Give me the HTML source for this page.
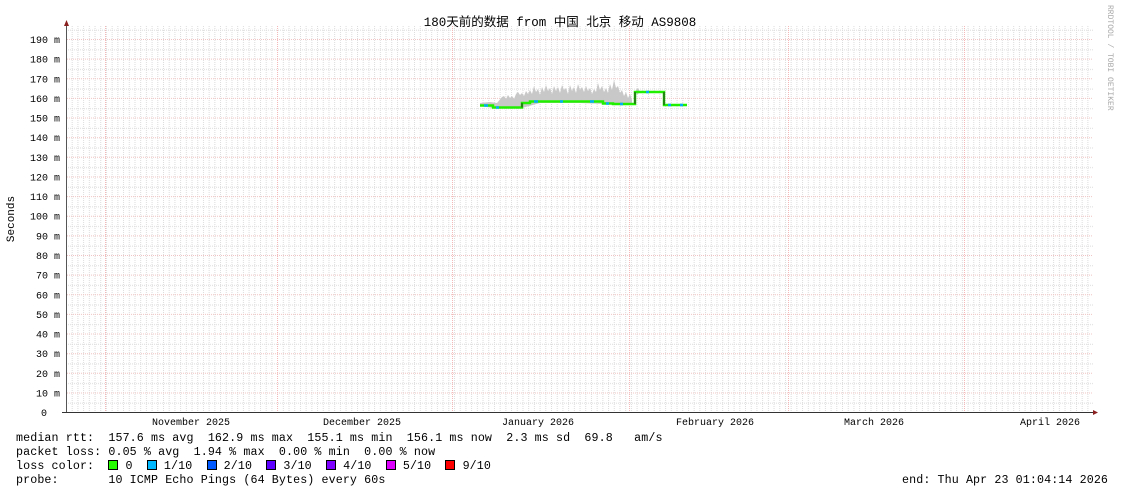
<!DOCTYPE html>
<html><head><meta charset="utf-8"><style>
html,body{margin:0;padding:0;background:#fff;}
body{width:1121px;height:494px;overflow:hidden;position:relative;}
svg{position:absolute;left:0;top:0;}
text{font-family:"Liberation Mono","DejaVu Sans Mono",monospace;font-size:10px;fill:#000;}
.leg{position:absolute;left:16px;font-family:"Liberation Mono",monospace;font-size:11.67px;letter-spacing:0.11px;white-space:pre;line-height:14px;color:#000;}
.sq{display:inline-block;width:8px;height:8px;border:1px solid #000;vertical-align:-1px;}
</style></head><body>
<svg width="1121" height="494" xmlns="http://www.w3.org/2000/svg">
<defs>
<pattern id="vg" x="66" y="0" width="5.706" height="2" patternUnits="userSpaceOnUse"><rect x="0" y="0" width="1" height="1" fill="#dcdcdc"/></pattern>
<pattern id="hg" x="0" y="26" width="2" height="19.63" patternUnits="userSpaceOnUse"><rect x="0" y="3.7" width="1" height="1" fill="#dcdcdc"/></pattern>
</defs>
<rect x="67" y="26" width="1026" height="386" fill="url(#vg)"/>
<rect x="67" y="26" width="1026" height="386" fill="url(#hg)"/>
<g stroke="#f5b8b8" stroke-dasharray="1,1">
<line x1="105.5" y1="26" x2="105.5" y2="412"/><line x1="277.5" y1="26" x2="277.5" y2="412"/><line x1="452.5" y1="26" x2="452.5" y2="412"/><line x1="629.5" y1="26" x2="629.5" y2="412"/><line x1="788.5" y1="26" x2="788.5" y2="412"/><line x1="964.5" y1="26" x2="964.5" y2="412"/>
</g>
<g stroke="#f0c4c4" stroke-dasharray="1,1">
<line x1="67" x2="1093" y1="39.5" y2="39.5"/><line x1="67" x2="1093" y1="59.1" y2="59.1"/><line x1="67" x2="1093" y1="78.8" y2="78.8"/><line x1="67" x2="1093" y1="98.4" y2="98.4"/><line x1="67" x2="1093" y1="118" y2="118"/><line x1="67" x2="1093" y1="137.7" y2="137.7"/><line x1="67" x2="1093" y1="157.3" y2="157.3"/><line x1="67" x2="1093" y1="177" y2="177"/><line x1="67" x2="1093" y1="196.6" y2="196.6"/><line x1="67" x2="1093" y1="216.2" y2="216.2"/><line x1="67" x2="1093" y1="235.9" y2="235.9"/><line x1="67" x2="1093" y1="255.5" y2="255.5"/><line x1="67" x2="1093" y1="275.1" y2="275.1"/><line x1="67" x2="1093" y1="294.8" y2="294.8"/><line x1="67" x2="1093" y1="314.4" y2="314.4"/><line x1="67" x2="1093" y1="334" y2="334"/><line x1="67" x2="1093" y1="353.7" y2="353.7"/><line x1="67" x2="1093" y1="373.3" y2="373.3"/><line x1="67" x2="1093" y1="393" y2="393"/>
</g>
<polygon fill="#c8c8c8" points="480,103 490,102 497,103 502,97 504,96 506,99 508,95 510,98 512,96 514,99 516,94 518,92 520,95 522,93 524,96 526,91 528,94 530,90 532,94 534,86 536,92 538,89 540,95 542,87 544,92 546,85 548,91 550,88 552,94 554,86 556,91 558,87 560,93 562,85 564,90 566,88 568,94 570,85 572,91 574,87 576,93 578,84 580,90 582,87 584,92 586,86 588,91 590,88 592,94 594,89 596,92 598,83 600,90 602,86 604,92 606,88 608,93 610,84 612,90 614,80 616,88 618,86 620,93 622,90 624,96 626,92 628,98 630,94 632,100 632,105 620,105 604,104 580,103 540,103 522,108 493,108 480,106"/>
<polygon fill="#c8c8c8" points="636,90 638,88 640,92 637,95"/>
<path d="M480,105.5 H493 V107.5 H522 V103 H530 V101.5 H603 V103.5 H613 V104 H635 V92 H664 V105 H687" fill="none" stroke="#20f000" stroke-width="2.5"/>
<path d="M484,105.5h4M496,107.5h3M534,101.5h4M560,101.5h3M590,101.5h4M606,103.5h3M620,104h3M646,92h3M668,105h3M680,105h3" stroke="#00b0f0" stroke-width="2.5"/>
<path d="M522,103v4.5M635,92v12M664,92v13" stroke="#222" stroke-width="1"/>
<line x1="66.5" y1="24" x2="66.5" y2="413" stroke="#555"/>
<line x1="62" y1="412.5" x2="1095" y2="412.5" stroke="#333"/>
<polygon points="64,26 69,26 66.5,20" fill="#8b2020"/>
<polygon points="1093,410 1093,415 1098,412.5" fill="#8b2020"/>
<g text-anchor="end">
<text x="60" y="43">190 m</text><text x="60" y="62.6">180 m</text><text x="60" y="82.3">170 m</text><text x="60" y="101.9">160 m</text><text x="60" y="121.5">150 m</text><text x="60" y="141.2">140 m</text><text x="60" y="160.8">130 m</text><text x="60" y="180.5">120 m</text><text x="60" y="200.1">110 m</text><text x="60" y="219.7">100 m</text><text x="60" y="239.4">90 m</text><text x="60" y="259">80 m</text><text x="60" y="278.6">70 m</text><text x="60" y="298.3">60 m</text><text x="60" y="317.9">50 m</text><text x="60" y="337.5">40 m</text><text x="60" y="357.2">30 m</text><text x="60" y="376.8">20 m</text><text x="60" y="396.5">10 m</text><text x="47" y="416">0</text>
</g>
<g text-anchor="middle">
<text x="191" y="425">November 2025</text><text x="362" y="425">December 2025</text><text x="538" y="425">January 2026</text><text x="715" y="425">February 2026</text><text x="874" y="425">March 2026</text><text x="1050" y="425">April 2026</text>
<text x="560" y="26" style="font-size:12.5px;font-family:'Liberation Mono','Noto Sans CJK SC',monospace">180天前的数据 from 中国 北京 移动 AS9808</text>
</g>
<text transform="translate(14,219) rotate(-90)" text-anchor="middle" style="font-size:11px">Seconds</text>
<text transform="translate(1108,5) rotate(90)" style="font-size:8px;fill:#aaa">RRDTOOL / TOBI OETIKER</text>
</svg>
<div class="leg" style="top:431px">median rtt:  157.6 ms avg  162.9 ms max  155.1 ms min  156.1 ms now  2.3 ms sd  69.8   am/s</div>
<div class="leg" style="top:445px">packet loss: 0.05 % avg  1.94 % max  0.00 % min  0.00 % now</div>
<div class="leg" style="top:459px">loss color:  <span class="sq" style="background:#26ff00"></span> 0  <span class="sq" style="background:#00b8ff"></span> 1/10  <span class="sq" style="background:#0059ff"></span> 2/10  <span class="sq" style="background:#5e00ff"></span> 3/10  <span class="sq" style="background:#7e00ff"></span> 4/10  <span class="sq" style="background:#dd00ff"></span> 5/10  <span class="sq" style="background:#ff0000"></span> 9/10</div>
<div class="leg" style="top:473px">probe:       10 ICMP Echo Pings (64 Bytes) every 60s</div>
<div class="leg" style="top:473px;left:902px">end: Thu Apr 23 01:04:14 2026</div>
</body></html>
